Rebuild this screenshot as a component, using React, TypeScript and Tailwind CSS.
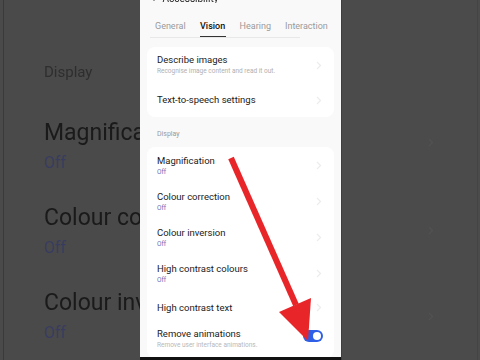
import React from "react";

// ─── Data ──────────────────────────────────────────
const TABS = ["General", "Vision", "Hearing", "Interaction"];

type Row = { title: string; sub?: string; off?: boolean; h: string };

const DISPLAY_ROWS: Row[] = [
  { title: "Magnification", off: true, h: "h-[36px]" },
  { title: "Colour correction", off: true, h: "h-[36px]" },
  { title: "Colour inversion", off: true, h: "h-[36px]" },
  { title: "High contrast colours", off: true, h: "h-[36px]" },
  { title: "High contrast text", h: "h-[33px]" },
];

function Chevron({ className = "" }: { className?: string }) {
  return (
    <svg width="6" height="9" viewBox="0 0 6 9" className={className}>
      <path d="M1 1l3.5 3.5L1 8" fill="none" stroke="currentColor" strokeWidth="1.2" />
    </svg>
  );
}

function SettingRow({ row }: { row: Row }) {
  return (
    <div className={`flex items-center justify-between pl-[10px] pr-[12px] ${row.h}`}>
      <div className="flex flex-col">
        <span className="text-[9.5px] leading-[12px] text-[#1b1b1b]">{row.title}</span>
        {row.off && <span className="mt-[1px] text-[6.5px] leading-[8px] text-[#6a6ab5]">Off</span>}
      </div>
      <Chevron className="text-[#ececec]" />
    </div>
  );
}

// ─── Blurred zoom on the left ─────────────────────
function LeftPane() {
  return (
    <div className="relative h-full w-[140px] shrink-0 overflow-hidden bg-[#4a4a4a]">
      <div className="absolute left-[3px] top-0 h-full w-[1px] bg-[#3a3a3a]" />
      <div className="flex flex-col pl-[44px] pt-[62px] blur-[0.3px] whitespace-nowrap">
        <span className="text-[15px] leading-[20px] text-[#2e2e2e]">Display</span>
        <div className="mt-[36px] flex flex-col">
          <span className="text-[23px] leading-[30px] text-[#1a1a1a]">Magnification</span>
          <span className="mt-[3px] text-[16px] leading-[24px] text-[#383c62]">Off</span>
        </div>
        <div className="mt-[28px] flex flex-col">
          <span className="text-[23px] leading-[30px] text-[#1a1a1a]">Colour correction</span>
          <span className="mt-[3px] text-[16px] leading-[24px] text-[#383c62]">Off</span>
        </div>
        <div className="mt-[28px] flex flex-col">
          <span className="text-[23px] leading-[30px] text-[#1a1a1a]">Colour inversion</span>
          <span className="mt-[3px] text-[16px] leading-[24px] text-[#383c62]">Off</span>
        </div>
      </div>
    </div>
  );
}

function RightPane() {
  return (
    <div className="relative h-full flex-1 overflow-hidden border-l border-[#3e3e3e] bg-[#4b4b4b]">
      <div className="absolute right-[2px] top-0 h-full w-[1px] bg-[#444]" />
      <Chevron className="absolute left-[86px] top-[138px] text-[#525252]" />
      <Chevron className="absolute left-[86px] top-[226px] text-[#525252]" />
      <Chevron className="absolute left-[86px] top-[312px] text-[#525252]" />
    </div>
  );
}

function Arrow() {
  return (
    <svg className="pointer-events-none absolute left-0 top-0" width="201" height="360" viewBox="0 0 201 360">
      <line x1="91" y1="158" x2="156" y2="305" stroke="#e8262a" strokeWidth="6" strokeLinecap="butt" />
      <polygon points="139,312 171,298 168,341" fill="#e8262a" />
    </svg>
  );
}

export default function App() {
  return (
    <div
      className="flex h-[360px] w-[480px] overflow-hidden bg-[#4a4a4a]"
      style={{ fontFamily: "Roboto, 'Noto Sans', sans-serif" }}
    >
      <LeftPane />

      {/* Phone screenshot */}
      <div className="relative flex h-full w-[201px] shrink-0 flex-col overflow-hidden bg-[#f9f9f9]">
        <div className="-mt-[6px] h-[9px] overflow-hidden pl-[12px] text-[10px] leading-[10px] text-[#222] blur-[0.5px]">
          ‹ &nbsp; Accessibility
        </div>

        {/* Tabs */}
        <div className="mt-[17px] flex items-start gap-[14px] pl-[15px] text-[9px] leading-[12px] whitespace-nowrap">
          {TABS.map((t) => (
            <div key={t} className="flex flex-col items-center">
              <span className={t === "Vision" ? "font-medium text-[#111]" : "text-[#9a9a9a]"}>{t}</span>
              {t === "Vision" && <span className="mt-[4px] h-[2px] w-[26px] bg-[#333]" />}
            </div>
          ))}
        </div>
        <div className="ml-[10px] mt-[-1px] h-[1px] w-[150px] bg-[#e8e8e8]" />

        {/* Card 1 */}
        <div className="mx-[7px] mt-[9px] rounded-[8px] bg-white">
          <div className="flex h-[36px] items-center justify-between pl-[10px] pr-[12px]">
            <div className="flex flex-col">
              <span className="text-[9.5px] leading-[12px] text-[#1b1b1b]">Describe images</span>
              <span className="mt-[1px] text-[6.5px] leading-[9px] text-[#b0b0b0]">
                Recognise image content and read it out.
              </span>
            </div>
            <Chevron className="text-[#ececec]" />
          </div>
          <div className="flex h-[34px] items-center justify-between pl-[10px] pr-[12px]">
            <span className="text-[9.5px] leading-[12px] text-[#1b1b1b]">Text-to-speech settings</span>
            <Chevron className="text-[#ececec]" />
          </div>
        </div>

        <div className="mt-[12px] pl-[17px] text-[7px] leading-[10px] text-[#9a9a9a]">Display</div>

        {/* Card 2 */}
        <div className="mx-[7px] mt-[8px] rounded-[8px] bg-white">
          {DISPLAY_ROWS.map((r) => (
            <SettingRow key={r.title} row={r} />
          ))}
          <div className="flex h-[34px] items-start justify-between pl-[10px] pr-[11px] pt-[4px]">
            <div className="flex flex-col">
              <span className="text-[9.5px] leading-[12px] text-[#1b1b1b]">Remove animations</span>
              <span className="mt-[1px] text-[6.5px] leading-[9px] text-[#b8b8b8]">
                Remove user interface animations.
              </span>
            </div>
            <div className="mt-[2px] flex h-[12px] w-[20px] items-center justify-end rounded-full bg-[#2f5fe6] pr-[2px]">
              <span className="h-[8px] w-[8px] rounded-full bg-white" />
            </div>
          </div>
        </div>

        <div className="absolute bottom-0 left-0 h-[3px] w-full bg-[#111]" />
        <Arrow />
      </div>

      <RightPane />
    </div>
  );
}
